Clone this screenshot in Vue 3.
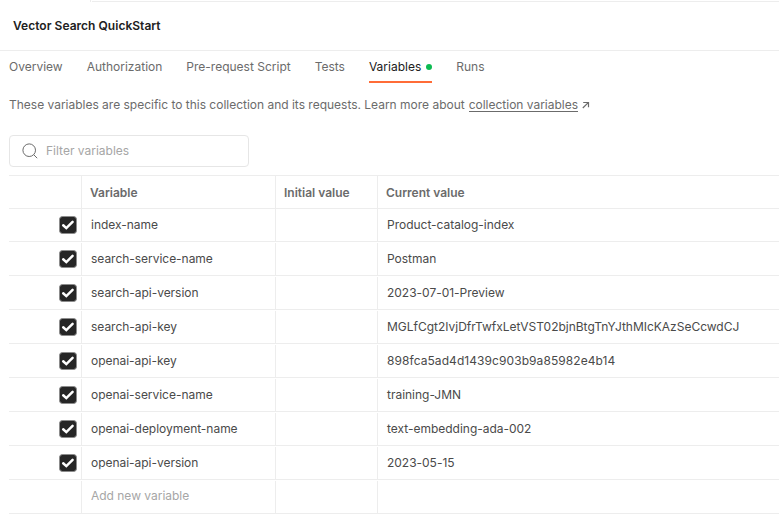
<script setup>
const tabs = ['Overview', 'Authorization', 'Pre-request Script', 'Tests', 'Variables', 'Runs']
const active = 'Variables'
const rows = [
  { name: 'index-name', value: 'Product-catalog-index' },
  { name: 'search-service-name', value: 'Postman' },
  { name: 'search-api-version', value: '2023-07-01-Preview' },
  { name: 'search-api-key', value: 'MGLfCgt2IvjDfrTwfxLetVST02bjnBtgTnYJthMIcKAzSeCcwdCJ' },
  { name: 'openai-api-key', value: '898fca5ad4d1439c903b9a85982e4b14', hex: true },
  { name: 'openai-service-name', value: 'training-JMN' },
  { name: 'openai-deployment-name', value: 'text-embedding-ada-002' },
  { name: 'openai-api-version', value: '2023-05-15' },
]
</script>

<template>
  <main class="page">
    <div class="tabstrip"><i class="tick"></i><i class="edge"></i></div>
    <header class="title">Vector Search QuickStart</header>
    <nav class="tabs">
      <a v-for="t in tabs" :key="t" class="tab" :class="{ active: t === active }">
        <span>{{ t }}</span><i v-if="t === active" class="dot"></i>
      </a>
    </nav>
    <p class="info">
      <span>These variables are specific to this collection and its requests. Learn more about</span>
      <a class="link">collection variables</a>
      <svg class="arrow" width="8" height="8" viewBox="0 0 8 8"><path d="M0.8 7L6 1.8M1.2 1.5H6.5V6.2" fill="none" stroke="#6b6b6b" stroke-width="1.2" /></svg>
    </p>
    <div class="filter">
      <svg width="16" height="16" viewBox="0 0 16 16"><circle cx="7.2" cy="7.2" r="6.3" fill="none" stroke="#6b6b6b" /><path d="M11.7 11.7L15.2 15.2" stroke="#6b6b6b" /></svg>
      <span>Filter variables</span>
    </div>
    <section class="table">
      <div class="row head">
        <div class="cell"></div>
        <div class="cell">Variable</div>
        <div class="cell">Initial value</div>
        <div class="cell">Current value</div>
      </div>
      <div v-for="r in rows" :key="r.name" class="row">
        <div class="cell check">
          <svg width="18" height="18" viewBox="0 0 18 18"><rect x="0.5" y="0.5" width="17" height="17" rx="3" fill="#262626" stroke="#8c8c8c" /><path d="M4.2 9.3L7.3 12.1L13.6 5.8" fill="none" stroke="#fff" stroke-width="2.5" stroke-linecap="round" /></svg>
        </div>
        <div class="cell name">{{ r.name }}</div>
        <div class="cell"></div>
        <div class="cell" :class="{ hex: r.hex }">{{ r.value }}</div>
      </div>
      <div class="row add">
        <div class="cell"></div>
        <div class="cell">Add new variable</div>
        <div class="cell"></div>
        <div class="cell"></div>
      </div>
    </section>
  </main>
</template>

<style>
body { margin: 0; background: #fff; }
</style>

<style scoped>
.page {
  box-sizing: border-box;
  width: 779px;
  height: 527px;
  overflow: hidden;
  background: #fff;
  font: 12px/16px Inter, "Liberation Sans", sans-serif;
  color: #6b6b6b;
  white-space: nowrap;
}
.tabstrip { display: flex; height: 2px; padding-left: 90px; }
.tick { width: 1px; background: #ededed; }
.edge { flex: 1; margin: 1px 0 0 1px; background: #ededed; }
.title {
  box-sizing: border-box;
  height: 49px;
  padding: 16px 13px 0;
  border-bottom: 1px solid #ededed;
  font-weight: 600;
  letter-spacing: 0.03px;
  color: #212121;
}
.tabs { display: flex; gap: 24px; height: 32px; padding-left: 9px; }
.tab { display: flex; gap: 5px; box-sizing: border-box; padding-top: 8px; }
.tab.active { color: #212121; border-bottom: 2px solid #ff6c37; }
.dot { width: 6px; height: 6px; margin-top: 5px; border-radius: 50%; background: #0cbb52; }
.info { display: flex; height: 16px; margin: 14px 0 0; padding-left: 9px; letter-spacing: -0.01px; }
.link { height: 14px; margin-left: 4px; border-bottom: 1px solid #6b6b6b; }
.arrow { margin: 4px 0 0 4px; }
.filter {
  display: flex;
  align-items: center;
  gap: 8px;
  box-sizing: border-box;
  width: 240px;
  height: 32px;
  margin: 22px 0 8px 9px;
  padding-left: 12px;
  border: 1px solid #e6e6e6;
  border-radius: 4px;
  color: #a6a6a6;
}
.table { margin-left: 9px; border-top: 1px solid #ededed; }
.row {
  display: grid;
  grid-template-columns: 73px 194px 102px 1fr;
  box-sizing: border-box;
  height: 34px;
  padding-top: 1px;
  border-bottom: 1px solid #ededed;
  color: #4a4a4a;
}
.row.head, .row.head + .row { height: 33px; padding-top: 0; }
.cell { box-sizing: border-box; padding: 8px 0 0 9px; border-right: 1px solid #ededed; letter-spacing: -0.015px; }
.cell:last-child { border-right: 0; }
.cell.name { letter-spacing: -0.03px; }
.cell.hex { letter-spacing: 0.07px; }
.head .cell { padding-left: 8px; padding-top: 9px; font-weight: 600; letter-spacing: 0; color: #6b6b6b; }
.check { display: flex; justify-content: flex-end; padding: 7px 4px 0 0; }
.add .cell { padding-top: 7px; color: #a6a6a6; }
</style>
